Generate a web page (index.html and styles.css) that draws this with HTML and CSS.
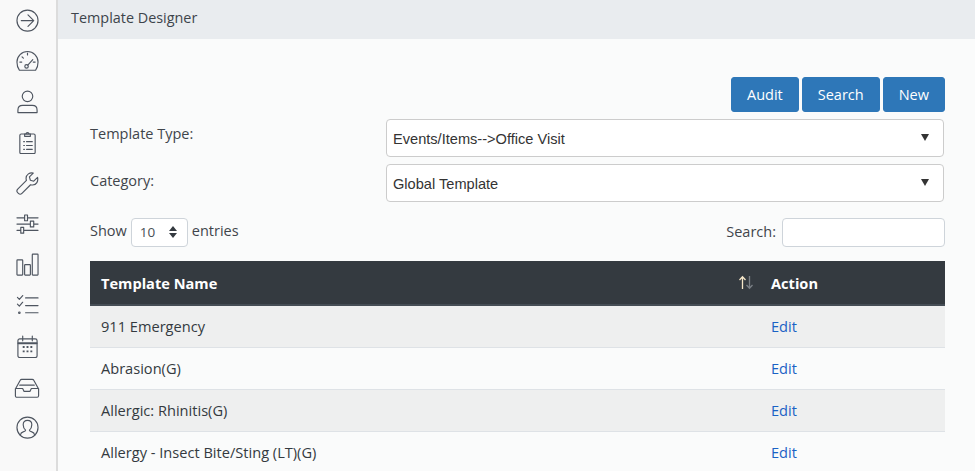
FILE: index.html
```html
<!DOCTYPE html>
<html lang="en">
<head>
<meta charset="utf-8">
<title>Template Designer</title>
<link rel="stylesheet" href="styles.css">
</head>
<body>
<div class="app">
  <nav class="sidebar">
    <svg class="ico" viewBox="0 0 24 24"><circle cx="12" cy="12" r="11"/><path d="M5.500 12h13M12.500 6l6 6-6 6"/></svg>
    <svg class="ico" viewBox="0 0 24 24"><path d="M3.500 21h17c1.600-2 2.500-5 2.500-8.500a11 11 0 0 0-22 0c0 3.500.9 6.500 2.500 8.500z"/><circle cx="11" cy="17" r="1.800"/><path d="M12.300 15.700l5.200-5.700M12 3v2M4 12.500h2M18 12.500h2M6.300 7l1.400 1.400"/></svg>
    <svg class="ico" viewBox="0 0 24 24"><circle cx="12" cy="6.500" r="5.500"/><path d="M2 23.500V21c0-3 2-5 5-5h10c3 0 5 2 5 5v2.500z"/></svg>
    <svg class="ico" viewBox="0 0 24 24"><rect x="4" y="3" width="16" height="20.500" rx="1.500"/><path d="M9 3h6v2.500H9zM10.500 3a1.500 1.500 0 0 1 3 0M8 11h.8M11 11h6M8 15h.8M11 15h6M8 19h.8M11 19h6"/></svg>
    <svg class="ico" viewBox="0 0 24 24"><path d="M22.500 5.500l-4 4-3.500-1-1-3.500 4-4c-3.500-1-7.500 1.500-7.500 5.500 0 1 .2 1.500.4 2.200L1.800 17.800c-1 1-1 2.600 0 3.700l.7.700c1 1 2.700 1 3.700 0l9-9c.7.2 1.300.3 2.200.3 4 0 6-4 5.100-8z"/></svg>
    <svg class="ico" viewBox="0 0 24 24"><path d="M1 6h8M12 6h11M1 12.500h14M18.500 12.500H23M1 19h4M8 19h15M9 3h3v6H9zM15 9.500h3.500v6H15zM5 16h3v6H5z"/></svg>
    <svg class="ico" viewBox="0 0 24 24"><rect x="1" y="7" width="6" height="16" rx=".6"/><rect x="9" y="12" width="6" height="11" rx=".6"/><rect x="17" y="1" width="6" height="22" rx=".6"/></svg>
    <svg class="ico" viewBox="0 0 24 24"><path d="M1.500 3.500l2 2 3.500-4M1.500 10.500l2 2 3.500-4M10 4h13M10 12h13M10 19.500h13"/><circle cx="3.500" cy="19.500" r=".8"/></svg>
    <svg class="ico" viewBox="0 0 24 24"><rect x="2" y="4" width="20" height="19.500" rx="2"/><path class="thick" d="M2.500 8.500h19"/><path d="M7 1v5M17 1v5"/><path class="dots" d="M7 11.500h2v2H7zM11 11.500h2v2h-2zM15 11.500h2v2h-2zM7 16h2v2H7zM11 16h2v2h-2zM15 16h2v2h-2z"/></svg>
    <svg class="ico wide" viewBox="0 0 26 24"><path d="M1 14.500L6 5.500c.3-.6.800-1 1.500-1h11c.7 0 1.200.4 1.500 1l5 9v7c0 1-.6 1.500-1.500 1.500h-21C1.600 23 1 22.500 1 21.500zM1 14h7.500l1.500 3h6l1.500-3H25M5.500 10.500h15"/></svg>
    <svg class="ico" viewBox="0 0 24 24"><circle cx="12" cy="12" r="11"/><path d="M4.500 20c.3-2 1-3 3-3.500 1.500-.4 2.500-1 2.500-1.800-2-1.800-2.500-3.600-2.500-5.700C7.500 6 9.300 4.500 12 4.500s4.500 1.500 4.500 4.500c0 2.100-.5 3.900-2.500 5.700 0 .8 1 1.400 2.500 1.800 2 .5 2.700 1.500 3 3.500"/></svg>
  </nav>
  <div class="content">
    <header class="topbar">Template Designer</header>
    <main class="main">
      <div class="actions">
        <button class="btn">Audit</button>
        <button class="btn">Search</button>
        <button class="btn">New</button>
      </div>
      <div class="form-row">
        <label class="form-label">Template Type:</label>
        <div class="select"><span>Events/Items--&gt;Office Visit</span><i class="caret"></i></div>
      </div>
      <div class="form-row">
        <label class="form-label cat">Category:</label>
        <div class="select"><span>Global Template</span><i class="caret"></i></div>
      </div>
      <div class="controls">
        <div class="length">Show
          <div class="mini-select"><span>10</span>
            <svg class="updown" viewBox="0 0 10 14"><path d="M5 1l4 5H1zM5 13L1 8h8z"/></svg>
          </div>
          entries</div>
        <div class="filter">Search:<div class="search-box"></div></div>
      </div>
      <table class="grid">
        <thead>
          <tr>
            <th class="col-name"><div class="th-inner">Template Name
              <svg class="sort" viewBox="0 0 16 15"><path class="up" d="M4.500 14V2M1.500 5l3-3.300 3 3.300"/><path class="down" d="M11.500 1v12M8.500 10l3 3.300 3-3.300"/></svg></div></th>
            <th class="col-action">Action</th>
          </tr>
        </thead>
        <tbody>
          <tr class="odd"><td>911 Emergency</td><td><a href="#">Edit</a></td></tr>
          <tr><td>Abrasion(G)</td><td><a href="#">Edit</a></td></tr>
          <tr class="odd"><td>Allergic: Rhinitis(G)</td><td><a href="#">Edit</a></td></tr>
          <tr><td>Allergy - Insect Bite/Sting (LT)(G)</td><td><a href="#">Edit</a></td></tr>
        </tbody>
      </table>
    </main>
  </div>
</div>
</body>
</html>
```
FILE: styles.css
```css
* { box-sizing: border-box; }
html, body { margin: 0; height: 100%; overflow: hidden; }
body { font-family: "Open Sans", sans-serif; font-size: 14.500px; color: #343a40; background: #fafbfb; }
.app { display: flex; height: 471px; }
.sidebar { width: 58px; flex: none; background: #f9f9f9; border-right: 2px solid #dcdcdc; display: flex; flex-direction: column; align-items: center; padding: 9px 2px 0 0; gap: 17.500px; }
.ico { width: 23px; height: 23.200px; flex: none; fill: none; stroke: #4e5560; stroke-width: 1.200; stroke-linecap: round; stroke-linejoin: round; }
.ico.wide { width: 26px; }
.ico .thick { stroke-width: 2; }
.ico .dots { fill: #4e5560; stroke: none; }
.content { flex: 1; min-width: 0; display: flex; flex-direction: column; }
.topbar { height: 39px; flex: none; background: #e9ecef; padding: 0 13px; line-height: 35px; font-size: 14.400px; color: #3d444b; }
.main { flex: 1; padding: 38px 30px 0 32px; }
.actions { display: flex; justify-content: flex-end; gap: 3px; height: 35px; }
.btn { font: 14.500px "Open Sans", sans-serif; color: #fff; background: #2e77b8; border: 1px solid #2e77b8; border-radius: 3px; padding: 0 15px; height: 35px; }
.form-row { display: flex; margin-top: 7px; height: 38px; }
.form-label { width: 296px; flex: none; line-height: 30px; color: #3f454b; }
.form-label.cat { line-height: 34px; }
.select { width: 558px; height: 38px; background: #fff; border: 1px solid #ccc; border-radius: 4px; display: flex; align-items: center; justify-content: space-between; padding: 2px 14px 0 6px; font: 14.600px "Liberation Sans", Arial, sans-serif; color: #333; }
.caret { width: 0; height: 0; border-left: 4px solid transparent; border-right: 4px solid transparent; border-top: 7px solid #333; margin-bottom: 4px; }
.controls { display: flex; justify-content: space-between; align-items: center; margin-top: 15px; height: 30px; }
.length { display: flex; align-items: flex-start; gap: 4px; color: #3f454b; line-height: 25px; }
.mini-select { width: 57px; height: 29px; border: 1px solid #ced4da; border-radius: 4px; background: #fff; display: flex; align-items: center; justify-content: space-between; padding: 0 9px 0 8px; font-size: 13.500px; color: #495057; }
.updown { width: 10px; height: 14px; fill: #343a40; }
.filter { display: flex; align-items: flex-start; gap: 6px; color: #3f454b; line-height: 27px; }
.search-box { width: 163px; height: 29px; background: #fff; border: 1px solid #ced4da; border-radius: 4px; }
.grid { width: 855px; border-collapse: collapse; table-layout: fixed; margin-top: 14px; }
.grid th { background: #343a40; color: #fff; font-size: 14.600px; font-weight: 700; text-align: left; height: 44px; padding: 0 11px; border-bottom: 2px solid #454d55; }
.col-name { width: 670px; }
.th-inner { display: flex; justify-content: space-between; align-items: center; }
.sort { width: 16px; height: 15px; fill: none; stroke-width: 1.300; margin-right: -5px; }
.sort .up { stroke: #f5e6c8; }
.sort .down { stroke: #7a7f85; }
.grid td { height: 42px; padding: 0 11px; font-size: 14.600px; color: #343a40; border-bottom: 1px solid #dee2e6; }
.grid tr.odd td { background: #eeefef; }
.grid a { color: #1a62c5; text-decoration: none; }
```
